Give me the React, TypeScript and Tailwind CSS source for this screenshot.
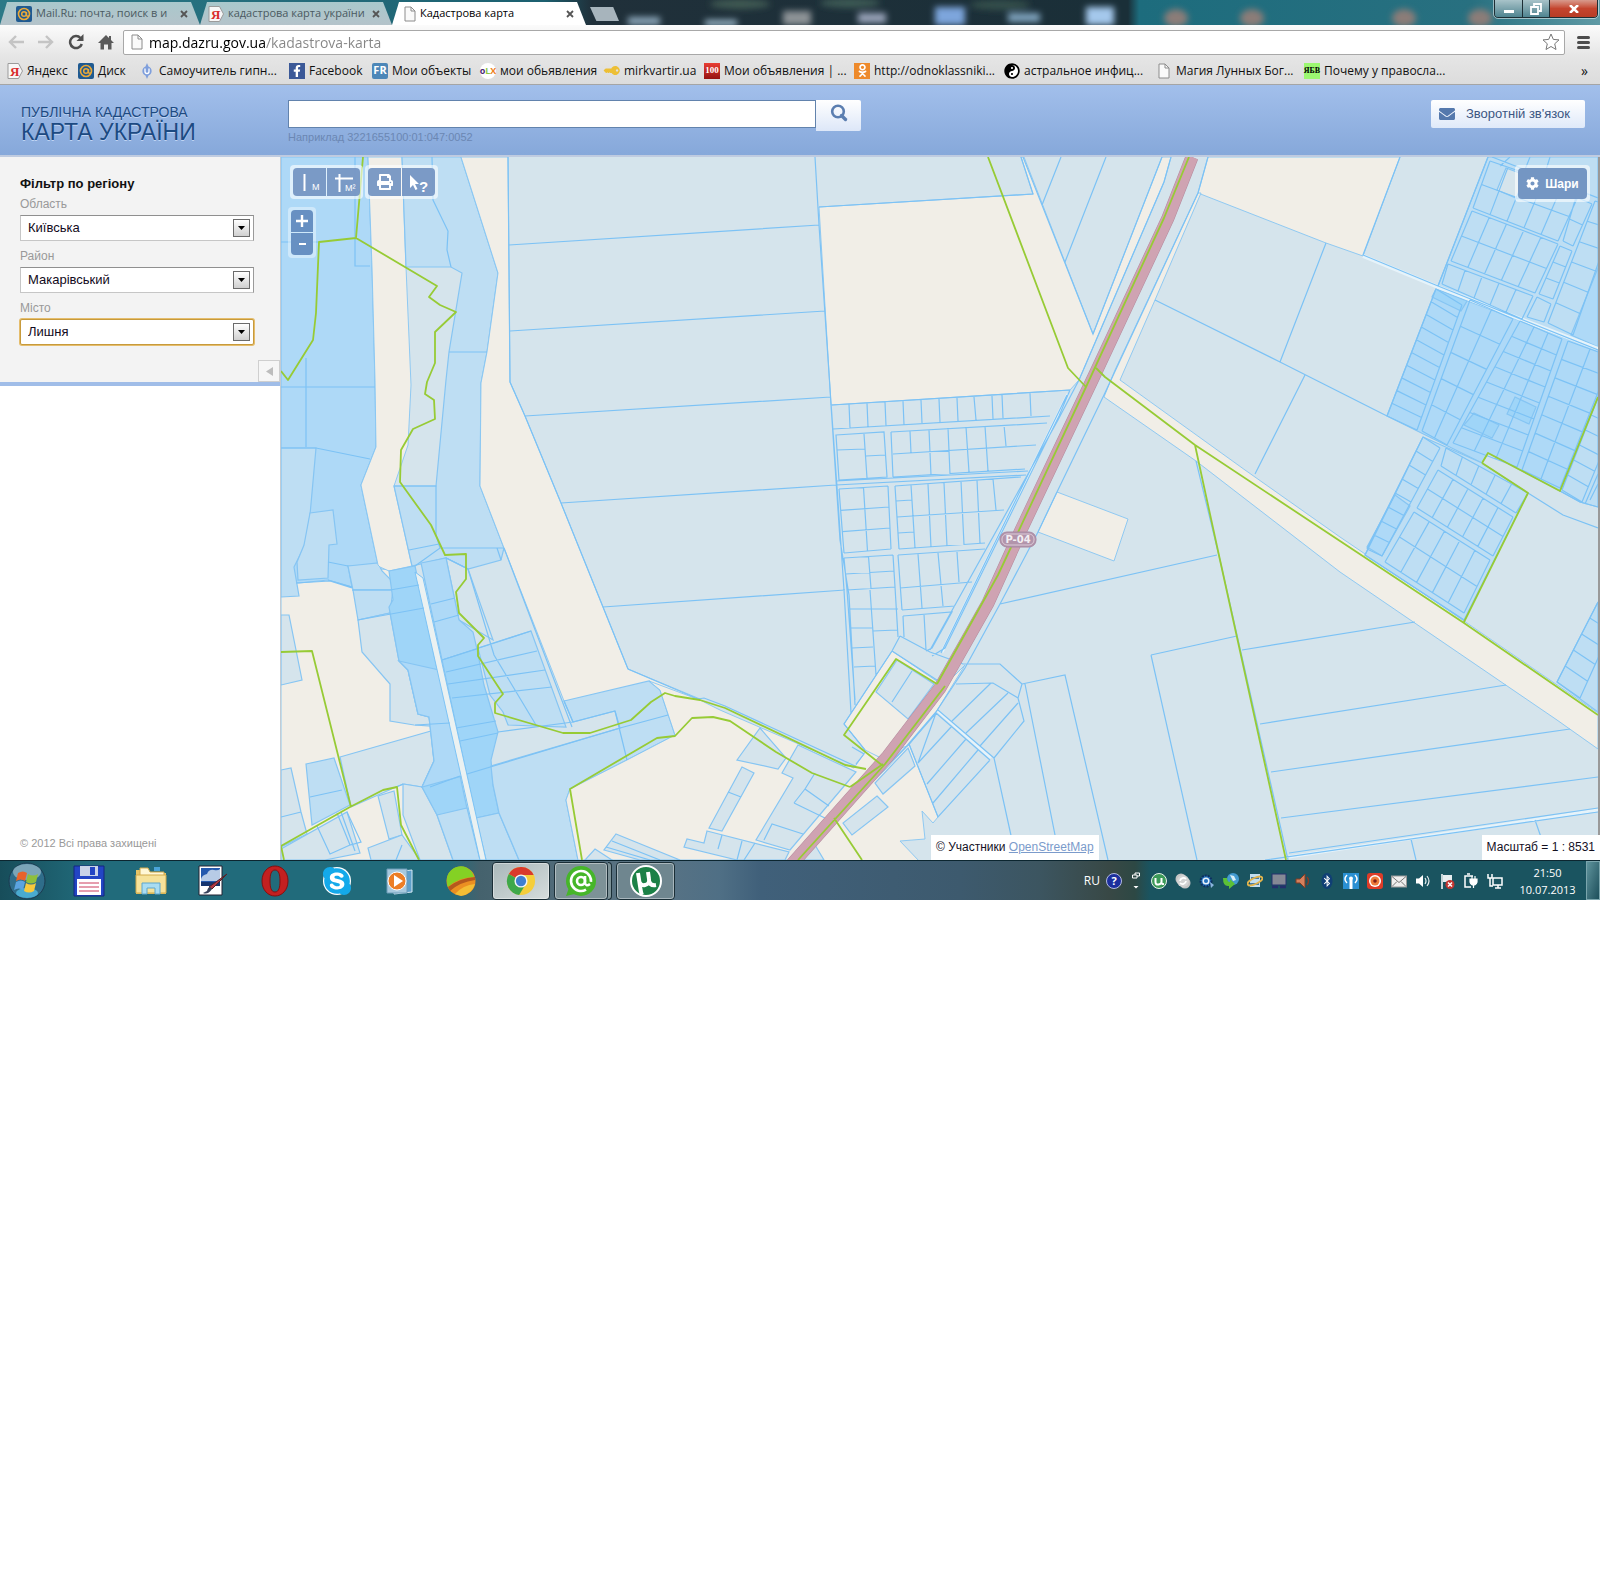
import type { ReactNode } from "react";
import {
  FaBluetoothB,
  FaCog,
  FaEnvelope,
  FaFacebookF,
  FaKey,
  FaOdnoklassniki,
  FaPrint,
  FaSkype,
  FaYinYang,
} from "react-icons/fa";

type Point = [number, number];

// Splits a four-cornered block (top-left, top-right, bottom-right, bottom-left) into parcels
const mesh = (tl: Point, tr: Point, br: Point, bl: Point, cols: number, rows: number) => {
  const at = (u: number, v: number) => {
    const mix = (i: 0 | 1) =>
      (tl[i] * (1 - u) + tr[i] * u) * (1 - v) + (bl[i] * (1 - u) + br[i] * u) * v;
    return `${mix(0).toFixed(1)} ${mix(1).toFixed(1)}`;
  };
  let d = "";
  for (let c = 0; c <= cols; c++) d += `M${at(c / cols, 0)}L${at(c / cols, 1)}`;
  for (let r = 0; r <= rows; r++) d += `M${at(0, r / rows)}L${at(1, r / rows)}`;
  return d;
};

const SAND = "#f1eee7";
const PALE = "#d5e4ec";
const LIGHT = "#bedef3";
const MID = "#aed9f7";
const DEEP = "#9fd5f8";

const areas: { fill: string; points: string }[] = [
  // west side
  { fill: SAND, points: "281,560 392,570 480,860 281,860" },
  { fill: MID, points: "281,157 368,157 372,267 375,380 376,447 361,485 378,565 348,566 352,587 328,580 299,583 281,583" },
  { fill: LIGHT, points: "281,448 316,448 310,515 305,545 294,567 299,596 281,597" },
  { fill: LIGHT, points: "310,513 333,510 337,544 329,545 328,578 298,580 297,562 304,545" },
  { fill: LIGHT, points: "348,566 378,563 382,571 391,580 393,590 353,590" },
  { fill: SAND, points: "368,157 402,157 406,267 411,385 408,445 394,486 412,566 389,571 380,567 378,565 361,485 376,447 375,380 372,267" },
  { fill: LIGHT, points: "402,157 461,157 498,273 487,352 481,383 480,486 504,548 501,560 468,569 446,558 412,566 394,486 436,486 446,380 449,352 462,273 451,267 406,267" },
  { fill: SAND, points: "461,157 508,157 510,382 525,416 561,503 603,607 628,669 700,699 665,694 564,701 504,548 480,486 481,383 487,352 498,273" },
  { fill: LIGHT, points: "353,590 393,590 390,613 358,620" },
  { fill: PALE, points: "358,620 390,613 399,661 408,670 418,714 429,717 431,726 414,725 390,721 390,684 362,652" },
  { fill: PALE, points: "340,757 431,731 434,761 422,787 404,784 396,787 351,807" },
  { fill: PALE, points: "403,784 422,787 437,815 453,860 420,860 403,815" },
  { fill: PALE, points: "281,615 289,615 302,680 281,685" },
  { fill: PALE, points: "281,770 291,768 301,812 307,834 281,847" },
  { fill: LIGHT, points: "306,764 334,758 350,805 312,825" },
  { fill: PALE, points: "281,849 347,812 360,853 325,860 281,860" },
  { fill: PALE, points: "378,796 394,791 402,835 389,839" },
  { fill: PALE, points: "368,848 402,835 420,860 371,860" },
  // canal banks
  { fill: DEEP, points: "389,571 415,566 468,813 437,815 422,787 434,761 429,717 418,714 408,670 399,661 389,607 393,600" },
  { fill: MID, points: "399,661 439,670 462,776 422,787 434,761 429,717 418,714 408,670" },
  { fill: LIGHT, points: "437,815 467,808 480,860 453,860" },
  { fill: PALE, points: "446,558 468,569 493,640 459,620" },
  { fill: MID, points: "421,563 446,558 459,620 473,632 477,649 442,660" },
  { fill: DEEP, points: "442,660 477,649 484,685 498,732 491,760 493,785 499,813 476,818" },
  { fill: LIGHT, points: "476,818 499,813 519,860 486,860" },
  { fill: LIGHT, points: "478,648 531,631 566,727 508,725 503,712 490,695" },
  { fill: LIGHT, points: "564,701 649,681 660,690 675,735 627,760 570,789 566,800 578,860 519,860 499,813 493,785 491,766 620,728 615,711 573,722" },
  // south centre
  { fill: SAND, points: "649,681 700,700 720,710 854,768 870,745 882,762 792,860 578,860 566,800 570,789 627,760 675,735 660,690" },
  { fill: PALE, points: "760,728 786,758 778,769 737,760" },
  { fill: PALE, points: "798,745 856,772 845,785 790,850 756,840 793,778 782,773" },
  { fill: PALE, points: "742,767 754,773 722,831 709,828" },
  { fill: PALE, points: "707,831 789,852 785,860 737,860 684,847 687,839 704,843" },
  { fill: PALE, points: "616,834 680,860 640,860 604,850" },
  { fill: PALE, points: "595,849 612,860 585,860" },
  { fill: SAND, points: "892,651 941,684 908,726 885,760 865,750 844,724" },
  { fill: PALE, points: "897,660 934,684 908,719 876,692" },
  { fill: SAND, points: "885,770 909,744 938,817 933,823 922,811 925,839 900,841 920,862 800,862 835,818" },
  { fill: PALE, points: "908,748 915,766 883,794 875,783" },
  { fill: PALE, points: "877,796 888,807 852,835 843,823" },
  { fill: PALE, points: "812,840 818,850 824,860 796,860" },
  { fill: SAND, points: "965,665 936,712 908,746 900,748 940,690" },
  // along the highway
  { fill: SAND, points: "819,207 1033,194 1021,157 1024,157 1093,334 1162,157 1171,157 1164,182 1079,380 1070,390 831,405" },
  { fill: SAND, points: "1057,492 1128,519 1114,561 1038,532" },
  { fill: SAND, points: "1208,157 1198,193 1326,243 1363,256 1400,157" },
  { fill: SAND, points: "1198,193 1201,193 1155,300 1120,380 1245,470 1340,537 1464,621 1598,713 1598,749 1557,720 1340,572 1196,461 1104,397 1115,370" },
  // east side
  { fill: LIGHT, points: "1488,157 1438,286 1598,349 1598,157" },
  { fill: PALE, points: "1506,168 1528,176 1518,199 1497,190" },
  { fill: MID, points: "1598,268 1571,335 1598,347" },
  { fill: MID, points: "1436,289 1598,350 1598,397 1560,491 1488,453 1482,463 1387,416" },
  { fill: DEEP, points: "1436,289 1467,301 1461,311 1432,297" },
  { fill: DEEP, points: "1515,397 1536,407 1529,424 1507,414" },
  { fill: DEEP, points: "1474,413 1499,425 1492,438 1464,425" },
  { fill: LIGHT, points: "1598,397 1560,491 1580,502 1598,507" },
  { fill: LIGHT, points: "1423,437 1365,555 1464,620 1528,493 1482,463" },
  { fill: MID, points: "1395,495 1410,506 1382,556 1367,547" },
  { fill: LIGHT, points: "1598,602 1557,682 1598,712" },
];

const parcelLines = [
  // west
  "M355 157V266H370M281 242H319M306 358V447M281 387H375M281 448H316L370 459M432 157L433 200L448 231L447 250L451 267",
  "M328 562L348 566M328 580L352 587M296 583L330 581L352 588M352 590H393M409 550L439 544M415 566L440 548H504M446 558L468 569M504 548L572 727M497 548L501 560M449 352H487",
  "M390 590L419 585M358 620L424 608M431 604L455 598M434 622L459 615M468 569L494 655L536 725M442 660L531 631M446 672L537 651M448 684L545 670M452 698L552 687M456 728L496 721M460 741L498 733M467 774L620 728L668 715M430 787L460 776",
  "M394 486H436V535L440 548M415 725L450 723M498 732L573 722L615 711M615 711L627 760M573 722L564 701M310 797L342 790M281 817L301 812M317 826L330 854L350 845M337 813L350 845L361 842L347 812M341 812L355 851M396 787L403 784M402 845L396 860",
  // long fields
  "M508 157L510 382L525 416L561 503L603 607L628 669L698 699L704 698L725 706L855 766",
  "M509 245L819 225M510 331L825 311M525 416L831 397M561 503L836 485M603 607L845 590",
  "M815 157L819 225L831 403L837 487L844 590L851 713M831 405L840 540L849 595L855 705",
  "M819 207L1033 194L1021 157M1023 157L1093 334L1162 157M1061 157L1042 205M1106 157L1065 262",
  "M1171 157L1164 182L1079 380L1058 420L930 650M1070 390L1059 416L945 648L932 656M1067 395L941 653",
  "M1208 157L1198 193L1104 395L1057 492L1038 532L1000 604L965 668L936 712L905 748L840 812",
  // village blocks by the highway
  "M832 405L1070 390M833 429L1050 416M849 404L850 428M867 403L868 427M885 402L886 426M903 401L904 425M921 400L922 423M939 399L940 422M957 398L958 421M974 397L976 420M992 396L993 419M1002 395L1003 418M1030 393L1031 416",
  "M836 435L884 432L887 477L839 480ZM864 434L867 478M837 450L865 449M866 456L885 455",
  "M891 432L1047 423M893 477L1025 469M891 432L893 477M893 454L1036 445M910 431L911 453M929 430L931 475M948 428L950 474M966 427L969 472M985 426L988 471M1004 425L1006 446",
  "M836 481L1028 471M836 485L1026 475",
  mesh([839, 489], [888, 486], [891, 549], [844, 553], 2, 3),
  "M895 486L1021 477M899 549L985 543M895 486L899 549M897 517L1004 510M896 501L912 500M898 533L914 532M911 485L915 548M928 484L931 547M944 483L947 546M961 481L964 545M977 480L980 543M993 479L996 510",
  mesh([844, 558], [893, 555], [895, 587], [847, 590], 2, 2),
  "M898 555L985 549M902 610L955 606M898 555L902 610M900 588L972 582M918 554L922 608M938 553L943 606M957 552L959 582",
  "M903 616L952 612L932 648L926 651M903 616L904 637M924 614L926 650M847 590L855 700M870 590L876 675M895 587L898 637M850 609L898 609M851 628L872 628M873 631L897 630M852 648L873 647M854 667L875 666",
  "M900 636L892 651L844 724L865 750M900 636L930 652L963 664H1000L1022 684L1018 698L1024 721L994 758M892 651L940 682M912 671L892 702",
  "M1000 604L1217 555M1022 684L1065 675L1108 860M1025 684L1060 860M994 758L1012 840",
  "M956 684L993 683L1018 698M938 710L994 758M936 713L990 760M991 683L952 721M1008 693L966 733M1018 703L980 746M909 744L936 713M936 713L918 763M952 726L918 763M966 739L927 784M978 750L933 803M990 760L938 817L909 744",
  "M728 792L741 797M815 773L805 789L829 806M794 803L829 820M794 803L805 789M764 840L772 824L803 834M742 841L737 860M722 835L718 849M755 843L744 860M606 847L650 860M612 841L660 860M852 747L864 754L856 764",
  // east
  "M1326 243L1280 362M1155 300L1280 362L1387 416M1305 375L1255 474M1400 157L1363 255L1438 286L1598 350M1438 286L1488 157M1423 437L1365 555L1464 620M1387 416L1436 289",
  "M1196 461L1220 560L1288 860M1151 655L1237 636M1151 655L1197 860M1242 650L1415 622M1260 724L1506 685M1271 772L1570 729M1281 818L1598 777M1289 853L1598 808M1265 860L1598 812M1411 839L1416 860M1535 820L1542 840",
  mesh([1490, 161], [1580, 192], [1558, 241], [1473, 208], 5, 2),
  mesh([1472, 211], [1558, 244], [1535, 293], [1451, 261], 5, 2),
  mesh([1448, 264], [1533, 296], [1522, 319], [1442, 284], 5, 1),
  mesh([1576, 197], [1592, 204], [1573, 246], [1563, 241], 1, 2),
  mesh([1560, 246], [1572, 251], [1553, 299], [1539, 294], 1, 3),
  mesh([1537, 297], [1551, 304], [1544, 322], [1527, 317], 1, 1),
  mesh([1595, 201], [1618, 207], [1573, 335], [1548, 323], 1, 6),
  mesh([1436, 289], [1462, 305], [1417, 430], [1387, 416], 1, 10),
  mesh([1470, 300], [1513, 319], [1447, 445], [1422, 431], 2, 5),
  mesh([1520, 321], [1562, 339], [1517, 467], [1453, 443], 3, 8),
  mesh([1568, 341], [1612, 357], [1560, 488], [1522, 470], 2, 7),
  mesh([1597, 400], [1620, 410], [1582, 502], [1562, 490], 1, 6),
  mesh([1438, 470], [1513, 517], [1493, 556], [1417, 508], 5, 2),
  mesh([1414, 512], [1490, 560], [1464, 613], [1385, 562], 5, 2),
  mesh([1446, 448], [1528, 493], [1516, 513], [1441, 466], 5, 1),
  mesh([1423, 437], [1440, 448], [1382, 556], [1367, 549], 1, 8),
  mesh([1598, 602], [1618, 614], [1580, 698], [1557, 682], 1, 5),
  "M1492 157L1598 198M1510 157L1500 166M1530 157L1524 172M1550 157L1546 170M1528 493L1563 515L1598 528M1560 491L1580 502L1598 507M1585 504L1598 474M1590 500L1598 484",
].join("");

const borders = [
  "M363 157L356 238L319 242L316 313L313 340L288 380L281 371",
  "M356 238L437 286L429 297L440 305L456 312L435 332V363L427 382L425 394L434 400L435 419L413 429L401 450L400 482L431 525L445 555L466 554V579L456 592L459 613L484 638L478 645V656L503 694L495 703V713L563 733H590L631 720L651 702L665 693L675 696L700 700L725 708L845 765L866 769",
  "M850 787L812 773L776 752L730 721L713 717L692 718L675 736L657 738L570 789L582 860",
  "M281 652L312 651L351 807M281 846L350 807L383 790L397 787L401 825L419 860M281 846L284 860",
  "M988 157L1068 368L1086 387M1096 368L1105 377L1195 445L1340 541L1464 623L1598 715",
  "M1195 445L1203 482L1220 560L1286 860",
  "M1482 463L1488 453L1560 491L1598 397M1482 463L1528 493L1464 622",
  "M937 684L896 659L844 735L883 766M834 818L862 860",
  "M1189 157L1164 218L1086 387L998 575L937 684",
  "M945 686L885 764L798 860M850 787L883 764",
].join("");

const highway = "M1192 157L1168 218L1096 372L1021 530L988 603L940 688L888 756L792 864";

const CadastreMap = () => (
  <svg viewBox="281 157 1317 703" className="block w-full" role="img" aria-label="Кадастрова карта">
    <rect x="281" y="157" width="1317" height="703" fill={PALE} />
    {areas.map(({ fill, points }) => (
      <polygon key={points} points={points} fill={fill} stroke="#86c5f3" strokeWidth={fill === SAND ? 0.9 : 1.2} />
    ))}
    <path d="M415 572L423 578L486 860H480Z" fill="#ebf1f1" stroke="#7dc3f5" />
    <path d="M1363 256L1438 287L1598 349" stroke="#e6f3fa" strokeWidth="4" fill="none" />
    <path d="M1068 394L942 652M1289 857L1598 810M938 711L991 758" stroke="#e6f3fa" strokeWidth="3" fill="none" />
    <path d={parcelLines} fill="none" stroke="#7cc2f5" strokeWidth="1.2" />
    <path d={highway} fill="none" stroke="#b48a9d" strokeWidth="13" />
    <path d={highway} fill="none" stroke="#cfa3b2" strokeWidth="12" />
    <path d={borders} fill="none" stroke="#97cb35" strokeWidth="1.8" strokeLinejoin="round" />
    <rect x="1000" y="532" width="36" height="15" rx="7" fill="#b294ab" stroke="#a88aa3" />
    <rect x="1002" y="534" width="32" height="11" rx="5" fill="none" stroke="#dccbd8" />
    <text x="1018" y="543" textAnchor="middle" fontSize="10" fontWeight="bold" fill="#f3eef2" className="font-['DejaVu_Sans',sans-serif]">
      P-04
    </text>
  </svg>
);

const PageIcon = () => (
  <svg viewBox="0 0 12 16" className="h-4 w-3 shrink-0">
    <path d="M1 1h6l4 4v10H1z" fill="#fafafa" stroke="#8c8c8c" />
    <path d="M7 1v4h4" fill="none" stroke="#8c8c8c" />
  </svg>
);

const YandexIcon = () => (
  <svg viewBox="0 0 16 16" className="size-4 shrink-0">
    <path d="M1 .5h10.500l4 7.500-4 7.500H1z" fill="#f7f7f7" stroke="#9b9b9b" />
    <text x="3" y="13" fontSize="13" fontWeight="bold" fill="#d92b2b" className="font-['Liberation_Serif',serif]">Я</text>
  </svg>
);

const MailIcon = () => (
  <svg viewBox="0 0 16 16" className="size-4 shrink-0">
    <rect width="16" height="16" rx="2" fill="#1f5a91" />
    <circle cx="8" cy="8" r="5.500" fill="none" stroke="#e9a93a" strokeWidth="1.600" />
    <circle cx="8" cy="8" r="2.300" fill="none" stroke="#e9a93a" strokeWidth="1.500" />
    <path d="M10.500 6v3.500q1 1.500 2.500 0" fill="none" stroke="#e9a93a" strokeWidth="1.400" />
  </svg>
);

const Favicon = ({ className, children }: { className: string; children: ReactNode }) => (
  <span className={`flex size-4 shrink-0 items-center justify-center ${className}`}>{children}</span>
);

const bookmarks = [
  { label: "Яндекс", width: "w-[71px]", icon: <YandexIcon /> },
  { label: "Диск", width: "w-[61px]", icon: <MailIcon /> },
  {
    label: "Самоучитель гипн...",
    width: "w-[150px]",
    icon: (
      <svg viewBox="0 0 16 16" className="size-4 shrink-0">
        <path d="M8 0l1.500 3.500a4.800 4.800 0 0 1 0 9L8 16l-1.500-3.500a4.800 4.800 0 0 1 0-9z" fill="#7f9fdc" />
        <path d="M6 5.500v3a2 2 0 0 0 4 0v-3" fill="none" stroke="#fff" strokeWidth="1.300" />
      </svg>
    ),
  },
  { label: "Facebook", width: "w-[83px]", icon: <Favicon className="bg-[#3b5998] text-white"><FaFacebookF size={12} /></Favicon> },
  { label: "Мои объекты", width: "w-[108px]", icon: <Favicon className="rounded-xs bg-[#4d87b8] text-[11px] font-bold text-white">FR</Favicon> },
  {
    label: "мои обьявления",
    width: "w-[124px]",
    icon: (
      <Favicon className="rounded-full bg-white text-[9px] font-bold">
        <span className="text-[#4b2a77]">o</span>
        <span className="text-[#8dc63f]">L</span>
        <span className="text-[#ee7f22]">X</span>
      </Favicon>
    ),
  },
  { label: "mirkvartir.ua", width: "w-[100px]", icon: <Favicon className="text-[#edbf35]"><FaKey className="rotate-45" size={13} /></Favicon> },
  {
    label: "Мои объявления | ...",
    width: "w-[150px]",
    icon: <Favicon className="bg-linear-to-b from-[#ea3d33] to-[#951111] font-['Liberation_Serif',serif] text-[9px] font-bold text-white">100</Favicon>,
  },
  { label: "http://odnoklassniki...", width: "w-[150px]", icon: <Favicon className="bg-[#ee8a2b] text-white"><FaOdnoklassniki size={13} /></Favicon> },
  { label: "астральное инфиц...", width: "w-[152px]", icon: <Favicon className="rounded-full bg-white text-black"><FaYinYang size={16} className="rotate-180" /></Favicon> },
  { label: "Магия Лунных Бог...", width: "w-[148px]", icon: <Favicon className=""><PageIcon /></Favicon> },
  { label: "Почему у правосла...", width: "w-[150px]", icon: <Favicon className="bg-[#9cf871] font-['Liberation_Serif',serif] text-[8px] font-bold text-black">ЯБВ</Favicon> },
];

// Blurred desktop seen through the glass of the title bar
const GlassBackdrop = () => (
  <svg viewBox="0 0 1600 25" preserveAspectRatio="none" className="absolute inset-0 size-full" aria-hidden="true">
    <defs>
      <filter id="soft" x="-50%" y="-50%" width="200%" height="200%">
        <feGaussianBlur stdDeviation="3" />
      </filter>
      <linearGradient id="glass">
        <stop offset="0" stopColor="#2b7987" />
        <stop offset="0.340" stopColor="#1c6070" />
        <stop offset="0.370" stopColor="#20303a" />
        <stop offset="0.705" stopColor="#1a2f38" />
        <stop offset="0.712" stopColor="#1d6c7d" />
        <stop offset="0.920" stopColor="#287080" />
        <stop offset="1" stopColor="#5f9aa5" />
      </linearGradient>
    </defs>
    <rect width="1600" height="25" fill="url(#glass)" />
    <g filter="url(#soft)">
      <rect x="628" y="17" width="32" height="8" fill="#8aa5b8" />
      <rect x="705" y="20" width="32" height="6" fill="#9db9cb" />
      <rect x="783" y="11" width="28" height="14" fill="#8d9396" />
      <rect x="858" y="13" width="28" height="10" fill="#97a2b8" />
      <rect x="935" y="7" width="30" height="18" fill="#7da5dc" />
      <rect x="1008" y="13" width="32" height="9" fill="#7fa3bd" />
      <rect x="1086" y="7" width="28" height="18" fill="#a4c8ec" />
      <ellipse cx="740" cy="4" rx="30" ry="5" fill="#405a52" />
      <ellipse cx="850" cy="3" rx="30" ry="5" fill="#3c5a55" />
      <ellipse cx="1000" cy="5" rx="30" ry="5" fill="#35504b" />
      <ellipse cx="1176" cy="18" rx="12" ry="9" fill="#8b7d78" />
      <ellipse cx="1252" cy="18" rx="12" ry="9" fill="#8b7d78" />
      <ellipse cx="1404" cy="18" rx="12" ry="9" fill="#8b7d78" />
      <ellipse cx="1480" cy="18" rx="12" ry="9" fill="#8b7d78" />
    </g>
  </svg>
);

const Tab = ({ title, icon, active, className }: { title: string; icon: ReactNode; active?: boolean; className: string }) => (
  <button
    className={`flex h-[23px] items-center gap-1 pr-3 text-left text-[11px] [clip-path:polygon(7px_0,calc(100%-9px)_0,100%_100%,0_100%)] ${
      active ? "bg-white text-black" : "bg-linear-to-b from-[#a9c8cc] to-[#b4c3ca] text-[#4b5a61]"
    } ${className}`}
  >
    {icon}
    <span className="flex-1 overflow-hidden whitespace-nowrap">{title}</span>
    <svg viewBox="0 0 8 8" className="size-2 shrink-0">
      <path d="M1 1l6 6M7 1L1 7" stroke="#555" strokeWidth="1.800" />
    </svg>
  </button>
);

const BrowserChrome = () => (
  <header className="font-['Open_Sans','Noto_Sans',sans-serif]">
    <div className="relative h-[25px] overflow-hidden">
      <GlassBackdrop />
      <div className="relative flex h-full items-end justify-between">
        <div className="flex items-end">
          <Tab title="Mail.Ru: почта, поиск в и" className="w-[200px] pl-4" icon={<MailIcon />} />
          <Tab title="кадастрова карта україни" className="w-[192px] pl-2" icon={<YandexIcon />} />
          <Tab title="Кадастрова карта" active className="w-[194px] pl-3" icon={<PageIcon />} />
          <button aria-label="Новая вкладка" className="mb-1 ml-1 w-[29px] bg-[#a7b4bc] pt-3.5 [clip-path:polygon(0_0,80%_0,100%_100%,22%_100%)]" />
        </div>
        <div className="mr-0.5 flex h-[18px] self-start overflow-hidden rounded-b border border-t-0 border-[#1d2e35] outline outline-white/50">
          <button aria-label="Свернуть" className="flex w-7 items-end justify-center border-r border-[#1d2e35] bg-linear-to-b from-[#a8c3c9] to-[#4f8490] pb-1">
            <span className="h-[3px] w-2.5 bg-white" />
          </button>
          <button aria-label="Свернуть в окно" className="flex w-[27px] items-center justify-center border-r border-[#1d2e35] bg-linear-to-b from-[#a8c3c9] to-[#4f8490]">
            <svg viewBox="0 0 12 12" className="size-3">
              <path d="M4 3V1h7v7H9M1 4h7v7H1z" fill="none" stroke="#fff" strokeWidth="1.800" />
            </svg>
          </button>
          <button aria-label="Закрыть" className="flex w-[47px] items-center justify-center bg-linear-to-b from-[#d79a8d] via-[#c4442e] to-[#b83c25]">
            <svg viewBox="0 0 10 8" className="h-2 w-2.5">
              <path d="M1 0l8 8M9 0L1 8" stroke="#fff" strokeWidth="2.500" />
            </svg>
          </button>
        </div>
      </div>
    </div>

    <div className="flex h-8 items-center bg-linear-to-b from-[#fbfbfb] to-[#e5e5e5] px-2 pt-0.5">
      <nav className="flex items-center gap-3.5">
        <button aria-label="Назад">
          <svg viewBox="0 0 16 14" className="h-3.5 w-4">
            <path d="M8 1L2 7l6 6M2 7h14" fill="none" stroke="#c4c4c4" strokeWidth="2.400" />
          </svg>
        </button>
        <button aria-label="Вперёд">
          <svg viewBox="0 0 16 14" className="h-3.5 w-4">
            <path d="M8 1l6 6-6 6M14 7H0" fill="none" stroke="#c4c4c4" strokeWidth="2.400" />
          </svg>
        </button>
        <button aria-label="Обновить">
          <svg viewBox="0 0 16 16" className="size-4">
            <path d="M12.500 4A6 6 0 1 0 13.800 10" fill="none" stroke="#4f4f4f" strokeWidth="2.500" />
            <path d="M15.500 0v7h-7z" fill="#4f4f4f" />
          </svg>
        </button>
        <button aria-label="Домой">
          <svg viewBox="0 0 16 16" className="size-4">
            <path d="M8 1L0 9h2.500v6.500H6v-5h4v5h3.500V9H16l-3-3V2h-2v2z" fill="#5a5a5a" />
          </svg>
        </button>
      </nav>
      <div className="ml-[9px] flex h-[25px] flex-1 items-center rounded-xs border border-[#a8a8a8] bg-white pr-2 pl-[7px]">
        <PageIcon />
        <input
          aria-label="Адрес"
          defaultValue="map.dazru.gov.ua/kadastrova-karta"
          className="ml-1.5 flex-1 bg-[linear-gradient(90deg,#000_116px,#858585_116px)] bg-clip-text text-[14px] text-transparent outline-none"
        />
        <button aria-label="Добавить в закладки" className="-mr-1">
          <svg viewBox="0 0 18 18" className="size-[18px]">
            <path d="M9 1l2.300 5.400 5.700.5-4.300 3.900 1.300 5.700L9 13.500l-5 3 1.300-5.700L1 6.900l5.700-.5z" fill="#fff" stroke="#777" strokeLinejoin="round" />
          </svg>
        </button>
      </div>
      <button aria-label="Меню" className="mr-0.5 ml-3 flex w-[13px] flex-col gap-[2px]">
        <span className="h-[3px] rounded-sm bg-[#4c4c4c]" />
        <span className="h-[3px] rounded-sm bg-[#4c4c4c]" />
        <span className="h-[3px] rounded-sm bg-[#4c4c4c]" />
      </button>
    </div>

    <nav className="flex h-7 items-center border-b border-[#a5a5a5] bg-linear-to-b from-[#e5e5e5] to-[#dcdcdc] pl-[7px] text-[12px] text-[#101010]">
      {bookmarks.map(({ label, width, icon }) => (
        <a key={label} href="#" className={`flex shrink-0 items-center gap-1 whitespace-nowrap ${width}`}>
          {icon}
          {label}
        </a>
      ))}
      <button aria-label="Другие закладки" className="mr-3 ml-auto text-[14px]">»</button>
    </nav>
  </header>
);

const SiteHeader = () => (
  <div className="flex h-[72px] border-b-2 border-[#bfcbe0] bg-linear-to-b from-[#a2bfeb] to-[#86a8da]">
    <h1 className="w-[288px] shrink-0 pt-[18px] pl-[21px] text-[#1c4a82] [text-shadow:0_1px_0_#bfd4f4]">
      <span className="block text-[14px] leading-[18px]">ПУБЛІЧНА КАДАСТРОВА</span>
      <span className="block text-[23px] leading-[22px]">КАРТА УКРАЇНИ</span>
    </h1>
    <form className="pt-[15px]" onSubmit={(e) => e.preventDefault()}>
      <div className="flex items-start">
        <input id="search" className="h-7 w-[528px] border border-[#6283ad] bg-white px-2 text-sm outline-none" />
        <button aria-label="Пошук" className="flex h-[31px] w-[45px] justify-center rounded-r-xs bg-linear-to-b from-white to-[#dde7f8] pt-1">
          <svg viewBox="0 0 18 18" className="size-[18px]">
            <circle cx="8" cy="7.500" r="5.800" fill="none" stroke="#5b7eb0" strokeWidth="2.600" />
            <path d="M11.500 11.500l4 4" stroke="#5b7eb0" strokeWidth="3.400" strokeLinecap="round" />
          </svg>
        </button>
      </div>
      <label htmlFor="search" className="block text-[11px] leading-3 text-[#6b87b3]">
        Наприклад 3221655100:01:047:0052
      </label>
    </form>
    <button className="mt-[15px] mr-[15px] ml-auto flex h-7 w-[154px] items-center gap-[11px] rounded-xs bg-linear-to-b from-white to-[#dfe9f9] pl-2 text-[13px] text-[#3c5682]">
      <FaEnvelope className="text-[#5579ad]" size={16} />
      Зворотній зв'язок
    </button>
  </div>
);

const FilterSelect = ({ id, label, value, focused }: { id: string; label: string; value: string; focused?: boolean }) => (
  <div>
    <label htmlFor={id} className="block h-[19px] text-[12px] leading-4 text-[#999]">
      {label}
    </label>
    <div className="relative">
      <select
        id={id}
        className={`h-[26px] w-full appearance-none border bg-white pl-[7px] text-[13px] text-[#120a20] outline-none ${
          focused ? "rounded-xs border-[#c79a3c] ring-1 ring-[#e5bd6c]" : "border-[#c6c6c6] border-t-[#8f8f8f] border-r-[#9a9a9a]"
        }`}
      >
        <option>{value}</option>
      </select>
      <span className="pointer-events-none absolute top-1 right-1 flex h-[18px] w-[17px] items-center justify-center border border-[#6b6b6b] bg-linear-to-b from-white to-[#d0d0d0]">
        <svg viewBox="0 0 7 4" className="h-1 w-[7px]">
          <path d="M0 0h7L3.500 4z" />
        </svg>
      </span>
    </div>
  </div>
);

const Sidebar = () => (
  <aside className="flex w-[281px] shrink-0 flex-col border-r border-[#c3cbd3] bg-white">
    <div className="flex flex-col border-b-4 border-[#a0bde8] bg-[#f3f3f3] pt-[18px] pl-5">
      <h2 className="text-[13px] leading-[18px] font-bold text-[#111]">Фільтр по регіону</h2>
      <div className="mt-[3px] flex w-[234px] flex-col gap-[7px]">
        <FilterSelect id="oblast" label="Область" value="Київська" />
        <FilterSelect id="raion" label="Район" value="Макарівський" />
        <FilterSelect id="misto" label="Місто" value="Лишня" focused />
      </div>
      <button aria-label="Згорнути" className="mt-[15px] flex h-[22px] w-[22px] items-center justify-center self-end border border-[#cfcfcf] bg-[#f6f6f6]">
        <svg viewBox="0 0 7 9" className="h-[9px] w-[7px]">
          <path d="M7 0v9L0 4.500z" fill="#bdbdbd" />
        </svg>
      </button>
    </div>
    <p className="mt-auto pb-2.5 pl-5 text-[11px] leading-[14px] text-[#999]">© 2012 Всі права захищені</p>
  </aside>
);

const toolButton = "flex h-7 w-[33px] items-center justify-center bg-[#6f90c0]/90 text-white";

const MapPanel = () => (
  <main className="relative min-w-0 flex-1 border-r-2 border-[#999]">
    <CadastreMap />
    <div className="absolute top-2 left-[9px] flex gap-0.5">
      <div className="flex gap-px rounded bg-white/60 p-[3px]">
        <button aria-label="Виміряти відстань" className={`rounded-l-sm ${toolButton}`}>
          <svg viewBox="0 0 33 28" className="h-7 w-[33px]">
            <path d="M11.500 6v17" stroke="#fff" strokeWidth="2" />
            <text x="19" y="22" fontSize="9" fill="#fff">M</text>
          </svg>
        </button>
        <button aria-label="Виміряти площу" className={`rounded-r-sm ${toolButton}`}>
          <svg viewBox="0 0 33 28" className="h-7 w-[33px]">
            <path d="M12.500 6v18M8 10.500h18" stroke="#fff" strokeWidth="2" />
            <text x="18" y="23" fontSize="9" fill="#fff">M²</text>
          </svg>
        </button>
      </div>
      <div className="flex rounded bg-white/60 p-[3px]">
        <button aria-label="Друк" className={`mr-px rounded-l-sm ${toolButton}`}>
          <FaPrint size={16} />
        </button>
        <button aria-label="Довідка" className={`rounded-r-sm ${toolButton}`}>
          <svg viewBox="0 0 33 28" className="h-7 w-[33px]">
            <path d="M8 7v13l3-3 2.500 5 2-1-2.500-5h4z" fill="#fff" />
            <text x="17" y="24" fontSize="15" fontWeight="bold" fill="#fff">?</text>
          </svg>
        </button>
      </div>
    </div>
    <div className="absolute top-[50px] left-[7px] flex flex-col gap-px rounded bg-white/40 p-[3px]">
      <button aria-label="Наблизити" className="flex h-[22px] w-[22px] items-center justify-center rounded-t-sm bg-[#6790c2]">
        <svg viewBox="0 0 12 12" className="size-3"><path d="M6 0v12M0 6h12" stroke="#fff" strokeWidth="2.400" /></svg>
      </button>
      <button aria-label="Віддалити" className="flex h-[22px] w-[22px] items-center justify-center rounded-b-sm bg-[#6790c2]">
        <span className="h-0.5 w-[7px] bg-white" />
      </button>
    </div>
    <div className="absolute top-2 right-2 rounded bg-white/60 p-[3px]">
      <button className="flex h-[31px] w-[69px] items-center justify-center gap-1.5 rounded-sm bg-[#7496c3] text-[12px] font-bold text-white">
        <FaCog size={13} />
        Шари
      </button>
    </div>
    <p className="absolute bottom-0 left-[650px] bg-white px-[5px] text-[12px] leading-[25px] text-[#14101f]">
      © Участники <a href="#" className="text-[#7b9bcb] underline">OpenStreetMap</a>
    </p>
    <p className="absolute -right-0.5 bottom-0 bg-white px-[5px] text-[12px] leading-[25px] text-[#14101f]">Масштаб = 1 : 8531</p>
  </main>
);

const Launcher = ({ label, children }: { label: string; children: ReactNode }) => (
  <button aria-label={label} className="flex h-10 w-[62px] items-center justify-center">
    <svg viewBox="0 0 32 32" className="size-8">{children}</svg>
  </button>
);

const runningButton =
  "flex h-[38px] items-center justify-center rounded-sm border border-[#1a2e36] outline -outline-offset-2 outline-white/40";

const trayIcons: { name: string; art: ReactNode }[] = [
  { name: "uTorrent", art: <><circle cx="8" cy="8" r="7.500" fill="#3d9a59" stroke="#e8f3ea" /><path d="M4.500 5v4q0 3 3 2.500t3-2.500V5m0 4q0 2.500 2.500 2" fill="none" stroke="#fff" strokeWidth="2" /></> },
  { name: "Skype", art: <><circle cx="6" cy="6" r="5.500" fill="#c4c4c4" /><circle cx="10" cy="10" r="5.500" fill="#c4c4c4" /><circle cx="8" cy="8" r="6" fill="#d4d4d4" /><path d="M5 8a3.500 3.500 0 0 1 6-2M11 8a3.500 3.500 0 0 1-6 2" fill="none" stroke="#fff" strokeWidth="1.800" /></> },
  { name: "Агент", art: <><circle cx="7" cy="8" r="5.500" fill="#2472bd" stroke="#0d2f5e" strokeDasharray="2 1" strokeWidth="2" /><circle cx="7" cy="8" r="2.800" fill="none" stroke="#e7f1fa" strokeWidth="1.500" /><path d="M11 9l4 3-3 3z" fill="#8ab4dd" /></> },
  { name: "Загрузки", art: <><circle cx="10" cy="6" r="6" fill="#439bd1" /><path d="M7 2l4 1 2 4-3 1z" fill="#d9eef5" /><path d="M0 5q0 9 6 8v3l6-5-5-5v3Q4 9 4 5z" fill="#5cc136" /></> },
  { name: "Обновления", art: <><rect x="3" y="1" width="10" height="13" fill="#c3dff0" /><path d="M4 5h8M3 11h9" stroke="#497ca6" strokeWidth="2" /><ellipse cx="8" cy="8" rx="8" ry="3" fill="none" stroke="#e2b44c" strokeWidth="1.800" transform="rotate(-25 8 8)" /></> },
  { name: "Дисплей", art: <><rect x="1" y="1" width="14" height="11" fill="#858995" stroke="#24306c" /><path d="M1 14h6M9 14h6" stroke="#24306c" strokeWidth="2.500" /></> },
  { name: "Звук Realtek", art: <><path d="M1 6h4l5-5v14l-5-5H1z" fill="#d5805d" stroke="#7e3d24" /><path d="M12 4q3 4 0 8" fill="none" stroke="#863b26" strokeWidth="1.500" /></> },
  { name: "Bluetooth", art: <><ellipse cx="8" cy="8" rx="5.500" ry="8" fill="#103f75" /><FaBluetoothB x="2" y="2" size={12} color="#fff" /></> },
  { name: "Wi-Fi", art: <><rect width="16" height="16" fill="#2a90d3" /><path d="M8 7v9" stroke="#fff" strokeWidth="3" /><circle cx="8" cy="5.500" r="2" fill="#fff" /><path d="M4 2q-4 4 0 8M12 2q4 4 0 8" fill="none" stroke="#fff" strokeWidth="1.500" /></> },
  { name: "Антивирус", art: <><rect width="16" height="16" rx="3" fill="#dd3c28" /><circle cx="8" cy="8" r="6" fill="#fff" /><circle cx="8" cy="8" r="4.500" fill="#ed7b3a" /><circle cx="8" cy="8" r="1.800" fill="#801e16" /></> },
  { name: "Почта", art: <><rect x="0.500" y="3" width="15" height="11" fill="#eee" stroke="#999" /><path d="M1 3.500l7 6 7-6M1 13.500l5-5M15 13.500l-5-5" fill="none" stroke="#777" /></> },
  { name: "Громкость", art: <><path d="M1 5.500h3L8 2v12l-4-3.500H1z" fill="#fff" /><path d="M10 5q2 3 0 6M12 3q4 5 0 10" fill="none" stroke="#e8eef0" strokeWidth="1.200" /></> },
  { name: "Центр поддержки", art: <><path d="M3 1v15" stroke="#fff" strokeWidth="1.500" /><path d="M4 2h9v7H4z" fill="#e8eef0" /><circle cx="11" cy="11.500" r="4.500" fill="#c33530" /><path d="M9 9.500l4 4M13 9.500l-4 4" stroke="#fff" strokeWidth="1.500" /></> },
  { name: "Питание", art: <><path d="M8 14H2V3h8M4 1h3" fill="none" stroke="#fff" strokeWidth="1.500" /><path d="M7 6h7v3q-1 3-3.500 3T7 9zM9 3v3M12 3v3M10.500 12v3" fill="#fff" stroke="#fff" strokeWidth="1.200" /></> },
  { name: "Сеть", art: <><path d="M6 5h9v7H6zM8 15h6M11 12v3" fill="none" stroke="#fff" strokeWidth="1.500" /><path d="M1 1v4h4V1M3 5v8h3" fill="none" stroke="#fff" strokeWidth="1.500" /></> },
];

const Taskbar = () => (
  <footer className="flex h-10 items-center border-t border-[#0c2630] bg-[linear-gradient(90deg,#174d5a_0,#216b7b_90px,#216b7b_450px,#45626d_480px,#5b7484_640px,#4f6f85_720px,#40607a_760px,#3d5a6e_960px,#3c5560_1040px,#384845_1110px,#2d4844_1135px,#1a5460_1150px,#1a5460_100%)] font-['Open_Sans','Noto_Sans',sans-serif] text-white">
    <button aria-label="Пуск" className="mr-1 flex h-10 w-[54px] items-center justify-center">
      <svg viewBox="0 0 38 38" className="size-[38px]">
        <circle cx="19" cy="19" r="18" fill="#2f6d8a" stroke="#1b3b50" />
        <ellipse cx="19" cy="10" rx="14" ry="8" fill="#9bbdcc" opacity="0.700" />
        <ellipse cx="19" cy="31" rx="11" ry="5" fill="#54c6ee" opacity="0.700" />
        <path d="M10 11q5-3 9 0l-2 8q-4-3-9 0z" fill="#e8632b" />
        <path d="M20 12q5 3 10 0l-2 8q-5 3-10 0z" fill="#8fbf3c" />
        <path d="M8 20q5-3 9 0l-2 8q-4-3-9 0z" fill="#5ba3e0" />
        <path d="M18 21q5 3 10 0l-2 8q-5 3-10 0z" fill="#f8c93c" />
      </svg>
    </button>
    <Launcher label="Total Commander">
      <path d="M1 1h30v30H1z" fill="#2345c4" stroke="#15267e" />
      <path d="M7 1h18v10H7z" fill="#c9d3e8" /><path d="M17 2h5v8h-5z" fill="#2345c4" />
      <path d="M4 14h24v16H4z" fill="#fff" /><path d="M6 18h20M6 22h20M6 26h20" stroke="#cc3d5c" />
    </Launcher>
    <Launcher label="Проводник">
      <path d="M1 5h9l2 3h19v21H1z" fill="#e5c467" /><path d="M5 3h8l2 4h14v8H5z" fill="#fff7d6" stroke="#d2aa4b" />
      <path d="M19 2h6v4h-6z" fill="#4aa4d8" /><path d="M1 10h30v18H1z" fill="#f6e29a" stroke="#d2aa4b" />
      <path d="M7 29V18h18v11h-5v-6h-8v6z" fill="#a9dcf2" stroke="#5fa6cc" />
    </Launcher>
    <Launcher label="Графический редактор">
      <path d="M2 1h23v29H2z" fill="#fff" stroke="#223" /><path d="M4 3h19v18H4z" fill="#2459ad" />
      <path d="M4 14q1-4 6-5 2-5 7-4 4 1 6-1v12H4z" fill="#b7cbe6" /><path d="M4 17h19v4H4z" fill="#15346e" />
      <path d="M30 9L15 24l-3-2z" fill="#b23a45" stroke="#552026" /><path d="M15 24q-4 6-9 4l4-2q1-4 3-4z" fill="#39435c" />
    </Launcher>
    <Launcher label="Opera">
      <path fillRule="evenodd" d="M16 1C9 1 3 7 3 16s6 15 13 15 13-6 13-15S23 1 16 1zm0 4c4 0 5 5 5 11s-1 11-5 11-5-5-5-11 1-11 5-11z" fill="#c32020" stroke="#831010" />
    </Launcher>
    <button aria-label="Skype" className="flex h-10 w-[62px] items-center justify-center">
      <span className="flex size-7 items-center justify-center rounded-full bg-white text-[#14a9ea]"><FaSkype size={32} className="shrink-0" /></span>
    </button>
    <Launcher label="Windows Media">
      <path d="M11 7l18-2v22l-18 2z" fill="#5f9fca" stroke="#d6eaf5" /><path d="M4 4h20v24H4z" fill="#a7c9de" stroke="#6d9cb8" />
      <circle cx="14" cy="16" r="9" fill="#ec7e26" stroke="#fff" /><path d="M11 10l9 6-9 6z" fill="#fff" />
    </Launcher>
    <Launcher label="Браузер">
      <circle cx="16" cy="16" r="14.500" fill="#eb8f22" />
      <path d="M3 22Q-1 9 9 3q10-5 18 4l2 5Q14 12 3 22z" fill="#84d124" />
      <path d="M3 22q12-9 27-10v3Q15 17 5 26z" fill="#b5581d" />
      <path d="M10 29q8-9 20-10-3 10-14 12z" fill="#f4bd34" />
    </Launcher>
    <button aria-label="Google Chrome" className={`w-[58px] bg-linear-to-br from-[#a9b8ba] to-[#d5dcdc] ${runningButton}`}>
      <svg viewBox="0 0 32 32" className="size-[30px]">
        <circle cx="16" cy="16" r="15" fill="#f5ce3a" />
        <path d="M16 16L3 8.500A15 15 0 0 1 29.500 9.500H16z" fill="#d93a2c" />
        <path d="M3 8.500A15 15 0 0 0 14 31l7-11.500-5-3.500z" fill="#3ea84a" />
        <circle cx="16" cy="16" r="7" fill="#f3f5f5" /><circle cx="16" cy="16" r="5.500" fill="#3f7fd0" />
      </svg>
    </button>
    <button aria-label="Mail.Ru Агент" className={`ml-1 w-[54px] bg-[#7d9297] ${runningButton}`}>
      <svg viewBox="0 0 32 32" className="size-8">
        <path d="M5 20L1 31l13-3z" fill="#46b629" /><circle cx="16" cy="16" r="15" fill="#46b629" />
        <circle cx="16" cy="16" r="10" fill="none" stroke="#fff" strokeWidth="2.600" strokeDasharray="53 10" transform="rotate(60 16 16)" />
        <circle cx="16" cy="16" r="4" fill="none" stroke="#fff" strokeWidth="2.600" />
        <path d="M20 11v7q1 4 5 1" fill="none" stroke="#fff" strokeWidth="2.600" />
      </svg>
    </button>
    <span className="h-[38px] w-1 rounded-r-sm border border-l-0 border-[#1a2e36] bg-[#7d9297]" />
    <button aria-label="uTorrent" className={`ml-1 w-[59px] bg-[#6f868f] ${runningButton}`}>
      <svg viewBox="0 0 32 32" className="size-8">
        <circle cx="16" cy="16" r="15" fill="#1c8147" stroke="#fff" strokeWidth="2" />
        <path d="M8 8q1 6 2 13 1 7 2 9M9 15q1 6 6 5t4-6l-1-7m1 9q1 5 7 4" fill="none" stroke="#fff" strokeWidth="4" />
      </svg>
    </button>

    <div className="ml-auto flex h-full items-center">
      <span className="text-[12px]">RU</span>
      <svg viewBox="0 0 16 16" className="ml-1.5 size-4">
        <circle cx="8" cy="8" r="7.500" fill="#1c2f9d" stroke="#b3bbe2" />
        <text x="8" y="12" textAnchor="middle" fontSize="11" fontWeight="bold" fill="#fff">?</text>
      </svg>
      <svg viewBox="0 0 8 18" className="mr-[11px] ml-2.5 h-[18px] w-2">
        <path d="M3 3V1h4.500v3H5M.5 3H5v3H.5z" fill="none" stroke="#fff" />
        <path d="M1.500 14h5L4 16.500z" fill="#fff" />
      </svg>
      <div className="flex gap-2">
        {trayIcons.map(({ name, art }) => (
          <svg key={name} viewBox="0 0 16 16" className="size-4" role="img" aria-label={name}>{art}</svg>
        ))}
      </div>
      <time className="w-[83px] pl-1.5 text-center text-[11px] leading-[17px]">
        21:50
        <br />
        10.07.2013
      </time>
      <button aria-label="Свернуть все окна" className="h-full w-[14px] border border-[#7aa5ad] bg-linear-to-br from-[#5f949d] to-[#1c4f5b]" />
    </div>
  </footer>
);

export default function App() {
  return (
    <div className="min-h-screen bg-white font-['Liberation_Sans',Arial,sans-serif]">
      <BrowserChrome />
      <SiteHeader />
      <div className="flex">
        <Sidebar />
        <MapPanel />
      </div>
      <Taskbar />
    </div>
  );
}
